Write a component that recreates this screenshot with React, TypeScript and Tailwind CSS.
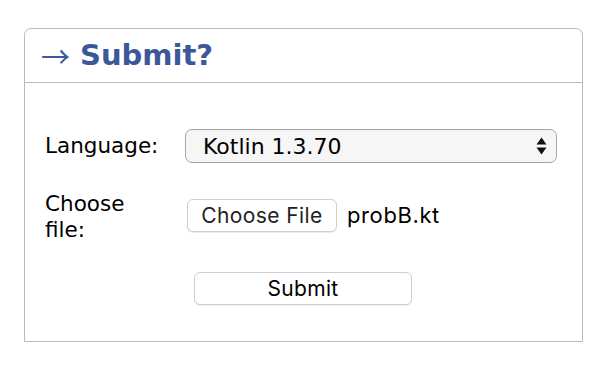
import React from "react";

const verdana = { fontFamily: '"DejaVu Sans", Verdana, sans-serif' };
const sysfont = { fontFamily: 'Inter, "Liberation Sans", sans-serif' };

export default function App() {
  return (
    <div className="w-[608px] h-[370px] bg-white pt-[28px] pl-[24px]">
      <div className="w-[559px] border border-[#bababa] rounded-t-[7px]">
        <div
          className="h-[54px] border-b border-[#bababa] flex items-center pl-[16px] text-[#3b5998] font-bold text-[29px] leading-none"
          style={verdana}
        >
          <span
            className="font-normal mr-[10px] text-[29px]"
            style={{ fontFamily: '"Noto Sans CJK JP", sans-serif' }}
          >
            →
          </span>
          <span>Submit?</span>
        </div>
        <div className="pl-[20px] pt-[46px] pb-[36px] text-[21px] text-black" style={verdana}>
          <div className="flex items-center h-[34px]">
            <div className="w-[140px] text-[21.5px]">Language:</div>
            <div className="relative w-[372px] h-[34px] border border-[#a5a5a5] rounded-[7px] bg-[#f6f6f6] flex items-center pl-[17px]">
              <span className="text-[22px]">Kotlin 1.3.70</span>
              <svg className="absolute right-[9px] top-[7px]" width="11" height="18" viewBox="0 0 11 18">
                <path d="M5.5 0.5 L10.5 7.5 L0.5 7.5 Z" fill="#111" />
                <path d="M5.5 17.5 L10.5 10.5 L0.5 10.5 Z" fill="#111" />
              </svg>
            </div>
          </div>
          <div className="flex items-center mt-[25px]">
            <div className="w-[142px] leading-[26px] pt-[3px] text-[21.5px]">
              Choose
              <br />
              file:
            </div>
            <div className="flex items-center" style={sysfont}>
              <div className="h-[33px] w-[150px] border border-[#cfcfcf] rounded-[6px] bg-white flex items-center justify-center text-[21px] tracking-[0.4px] text-[#222] shadow-[0_1px_1px_rgba(0,0,0,0.08)]">
                Choose File
              </div>
              <span className="ml-[10px] text-[22px] tracking-[0.6px]">probB.kt</span>
            </div>
          </div>
          <div className="flex mt-[29px] pl-[149px]">
            <div
              className="h-[33px] w-[218px] border border-[#cfcfcf] rounded-[6px] bg-white flex items-center justify-center text-[21px] tracking-[0.3px] text-black shadow-[0_1px_1px_rgba(0,0,0,0.08)]"
              style={sysfont}
            >
              Submit
            </div>
          </div>
        </div>
      </div>
    </div>
  );
}
